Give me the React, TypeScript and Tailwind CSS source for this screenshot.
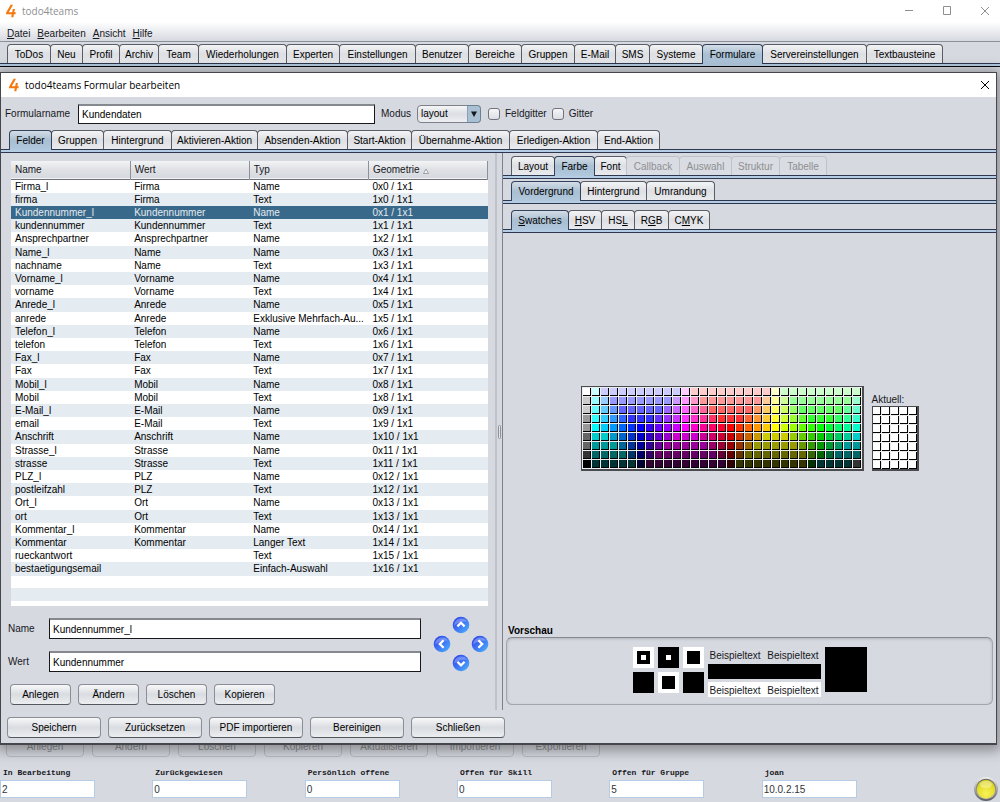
import React from "react";
import clsx from "clsx";

type TabDef = { label: React.ReactNode; width: string; selected?: boolean; disabled?: boolean };

const mainTabs: TabDef[] = [
  { label: "ToDos", width: "w-[43px]" },
  { label: "Neu", width: "w-[32px]" },
  { label: "Profil", width: "w-[37px]" },
  { label: "Archiv", width: "w-[39px]" },
  { label: "Team", width: "w-[40px]" },
  { label: "Wiederholungen", width: "w-[88px]" },
  { label: "Experten", width: "w-[53px]" },
  { label: "Einstellungen", width: "w-[76px]" },
  { label: "Benutzer", width: "w-[53px]" },
  { label: "Bereiche", width: "w-[53px]" },
  { label: "Gruppen", width: "w-[53px]" },
  { label: "E-Mail", width: "w-[41px]" },
  { label: "SMS", width: "w-[34px]" },
  { label: "Systeme", width: "w-[53px]" },
  { label: "Formulare", width: "w-[60px]", selected: true },
  { label: "Servereinstellungen", width: "w-[104px]" },
  { label: "Textbausteine", width: "w-[76px]" },
];

const formTabs: TabDef[] = [
  { label: "Felder", width: "w-[42px]", selected: true },
  { label: "Gruppen", width: "w-[52px]" },
  { label: "Hintergrund", width: "w-[68px]" },
  { label: "Aktivieren-Aktion", width: "w-[86px]" },
  { label: "Absenden-Aktion", width: "w-[90px]" },
  { label: "Start-Aktion", width: "w-[64px]" },
  { label: "Übernahme-Aktion", width: "w-[98px]" },
  { label: "Erledigen-Aktion", width: "w-[88px]" },
  { label: "End-Aktion", width: "w-[62px]" },
];

const propertyTabs: TabDef[] = [
  { label: "Layout", width: "w-[43px]" },
  { label: "Farbe", width: "w-[40px]", selected: true },
  { label: "Font", width: "w-[32px]" },
  { label: "Callback", width: "w-[53px]", disabled: true },
  { label: "Auswahl", width: "w-[52px]", disabled: true },
  { label: "Struktur", width: "w-[48px]", disabled: true },
  { label: "Tabelle", width: "w-[47px]", disabled: true },
];

const layerTabs: TabDef[] = [
  { label: "Vordergrund", width: "w-[69px]", selected: true },
  { label: "Hintergrund", width: "w-[66px]" },
  { label: "Umrandung", width: "w-[68px]" },
];

const chooserTabs: TabDef[] = [
  { label: <><u>S</u>watches</>, width: "w-[57px]", selected: true },
  { label: <><u>H</u>SV</>, width: "w-[33px]" },
  { label: <>HS<u>L</u></>, width: "w-[33px]" },
  { label: <>R<u>G</u>B</>, width: "w-[34px]" },
  { label: <>C<u>M</u>YK</>, width: "w-[41px]" },
];

const fields: string[][] = [
  ["Firma_l", "Firma", "Name", "0x0 / 1x1"],
  ["firma", "Firma", "Text", "1x0 / 1x1"],
  ["Kundennummer_l", "Kundennummer", "Name", "0x1 / 1x1"],
  ["kundennummer", "Kundennummer", "Text", "1x1 / 1x1"],
  ["Ansprechpartner", "Ansprechpartner", "Name", "1x2 / 1x1"],
  ["Name_l", "Name", "Name", "0x3 / 1x1"],
  ["nachname", "Name", "Text", "1x3 / 1x1"],
  ["Vorname_l", "Vorname", "Name", "0x4 / 1x1"],
  ["vorname", "Vorname", "Text", "1x4 / 1x1"],
  ["Anrede_l", "Anrede", "Name", "0x5 / 1x1"],
  ["anrede", "Anrede", "Exklusive Mehrfach-Au...", "1x5 / 1x1"],
  ["Telefon_l", "Telefon", "Name", "0x6 / 1x1"],
  ["telefon", "Telefon", "Text", "1x6 / 1x1"],
  ["Fax_l", "Fax", "Name", "0x7 / 1x1"],
  ["Fax", "Fax", "Text", "1x7 / 1x1"],
  ["Mobil_l", "Mobil", "Name", "0x8 / 1x1"],
  ["Mobil", "Mobil", "Text", "1x8 / 1x1"],
  ["E-Mail_l", "E-Mail", "Name", "0x9 / 1x1"],
  ["email", "E-Mail", "Text", "1x9 / 1x1"],
  ["Anschrift", "Anschrift", "Name", "1x10 / 1x1"],
  ["Strasse_l", "Strasse", "Name", "0x11 / 1x1"],
  ["strasse", "Strasse", "Text", "1x11 / 1x1"],
  ["PLZ_l", "PLZ", "Name", "0x12 / 1x1"],
  ["postleifzahl", "PLZ", "Text", "1x12 / 1x1"],
  ["Ort_l", "Ort", "Name", "0x13 / 1x1"],
  ["ort", "Ort", "Text", "1x13 / 1x1"],
  ["Kommentar_l", "Kommentar", "Name", "0x14 / 1x1"],
  ["Kommentar", "Kommentar", "Langer Text", "1x14 / 1x1"],
  ["rueckantwort", "", "Text", "1x15 / 1x1"],
  ["bestaetigungsemail", "", "Einfach-Auswahl", "1x16 / 1x1"],
];

// Palette rows; "ccf*9" repeats a colour nine times.
const palette = [
  "fff cff ccf*9 fcf fcc*9 ffc cfc*9",
  "ccc 9ff 9cf 99f*7 c9f f9f f9c f99*7 fc9 ff9 cf9 9f9*7 9fc",
  "ccc 6ff 6cf 69f 66f*5 96f c6f f6f f6c f69 f66*5 f96 fc6 ff6 cf6 9f6 6f6*5 6f9 6fc",
  "999 3ff 3cf 39f 36f 33f*3 63f 93f c3f f3f f3c f39 f36 f33*3 f63 f93 fc3 ff3 cf3 9f3 6f3 3f3*3 3f6 3f9 3fc",
  "999 0ff 0cf 09f 06f 03f 00f 30f 60f 90f c0f f0f f0c f09 f06 f03 f00 f30 f60 f90 fc0 ff0 cf0 9f0 6f0 3f0 0f0 0f3 0f6 0f9 0fc",
  "666 0cc*2 09c 06c 03c 00c 30c 60c 90c c0c*3 c09 c06 c03 c00 c30 c60 c90 cc0*3 9c0 6c0 3c0 0c0 0c3 0c6 0c9 0cc",
  "666 099*3 069 039 009 309 609 909*5 906 903 900 930 960 990*5 690 390 090 093 096 099*2",
  "333 066*4 036 006 306 606*7 603 600 630 660*7 360 060 063 066*3",
  "000 033*5 003 303*9 300 330*8 030 033*4 333",
].flatMap((row) =>
  row.split(" ").flatMap((run) => {
    const [color, count] = run.split("*");
    return Array<string>(Number(count ?? 1)).fill("#" + color);
  }),
);

function TabStrip({ tabs, label, className, bandClass }: { tabs: TabDef[]; label: string; className?: string; bandClass?: string }) {
  return (
    <div>
      <div role="tablist" aria-label={label} className={clsx("flex items-end", className)}>
        {tabs.map((tab, i) => (
          <div key={i} role="presentation" className={clsx("flex shrink-0 items-end", tab.width)}>
            <button
              role="tab"
              aria-selected={!!tab.selected}
              disabled={tab.disabled}
              className={clsx(
                "-mr-px flex-1 rounded-t-[4px] border border-b-0 text-center leading-[17px] whitespace-nowrap",
                tab.selected
                  ? "relative -mb-px h-[20px] border-[#33415a] bg-linear-to-b from-[#d3dde6] via-[#a9bfd2] to-[#b0c8dd] text-black"
                  : tab.disabled
                    ? "h-[19px] border-[#bfc2c9] bg-[#d9dce2] text-[#8e8f91]"
                    : "h-[19px] border-[#5a5d66] bg-linear-to-b from-[#f3f4f5] via-[#dddfe3] to-[#e8eaec] text-black",
              )}
            >
              {tab.label}
            </button>
          </div>
        ))}
      </div>
      <div className={clsx("h-[4px] border-y border-[#2d3850] bg-[#b4cde4]", bandClass)} />
    </div>
  );
}

function Logo() {
  return (
    <svg viewBox="0 0 12 14" className="h-[14px] w-[12px]" aria-hidden="true">
      <path d="M5.6 0.8H8L3.800 8.300H7.200L7.800 5H9.900L9.300 8.300H10.800L10.500 10.300H8.900L8.400 13.200H6.200L6.800 10.300H0.900L1.200 8.500z" fill="#f5780c" />
    </svg>
  );
}

function CloseIcon() {
  return (
    <svg viewBox="0 0 10 10" className="size-[10px]" aria-hidden="true">
      <path d="M1 1 9 9M9 1 1 9" fill="none" stroke="currentColor" strokeWidth="1" />
    </svg>
  );
}

function PushButton({ children, className }: { children: React.ReactNode; className?: string }) {
  return (
    <button
      className={clsx(
        "h-[21px] shrink-0 rounded-[4px] border border-[#8b8e95] border-b-[#55575d] bg-linear-to-b from-[#f8f8f9] via-[#d9dce1] to-[#eceef0] text-center leading-[18px] text-black",
        className,
      )}
    >
      {children}
    </button>
  );
}

const arrowPaths = {
  up: "M5.4 10.4 9 6.8l3.6 3.6",
  left: "M10.6 5.2 6.8 9l3.8 3.8",
  right: "M7.4 5.2 11.2 9l-3.8 3.8",
  down: "M5.4 7.8 9 11.4l3.6-3.6",
};

function ArrowButton({ dir, label, className }: { dir: keyof typeof arrowPaths; label: string; className?: string }) {
  return (
    <button aria-label={label} className={clsx("size-[18px]", className)}>
      <svg viewBox="0 0 18 18" className="size-[18px]">
        <defs>
          <linearGradient id={"orb-" + dir} x1="0" y1="0" x2="1" y2="1">
            <stop offset="0.1" stopColor="#2f45e6" />
            <stop offset="0.5" stopColor="#3f74f4" />
            <stop offset="1" stopColor="#4bb8fb" />
          </linearGradient>
        </defs>
        <circle cx="9" cy="9" r="8.3" fill={"url(#orb-" + dir + ")"} />
        <path d="M2.2 9.5A7 7 0 0 1 15 5.6C11 5 6 6 2.2 9.5z" fill="#fff" opacity="0.28" />
        <path d={arrowPaths[dir]} fill="none" stroke="#fff" strokeWidth="2.3" />
      </svg>
    </button>
  );
}

function CheckBox({ label }: { label: string }) {
  return (
    <label className="flex items-center gap-[5px]">
      <input
        type="checkbox"
        className="size-[12px] appearance-none rounded-[3px] border border-[#70737b] bg-linear-to-b from-[#f6f6f7] to-[#dcdee3]"
      />
      {label}
    </label>
  );
}

const inputClass =
  "min-w-0 border border-t-2 border-[#16181c] border-t-[#85888f] bg-white pl-[3px] text-black outline-none";

function Swatches({ colors, className, label }: { colors: string[]; className: string; label: string }) {
  return (
    <div aria-label={label} className={clsx("grid gap-px border border-r-2 border-b-2 border-[#4a4b4f] bg-[#ecedef]", className)}>
      {colors.map((color, i) => (
        <div key={i} className="size-[8px] border-r border-b border-black" style={{ backgroundColor: color }} />
      ))}
    </div>
  );
}

function FieldTable() {
  const head = "border-r border-[#8d9097] pl-[4px] text-left font-normal";
  return (
    <div className="h-[445px] overflow-hidden bg-white">
      <table className="w-full table-fixed border-collapse">
        <thead>
          <tr className="h-[18px] border-b border-[#6e7078] bg-linear-to-b from-[#f3f4f5] via-[#dfe1e5] to-[#d6d9df]">
            <th className={head}>Name</th>
            <th className={head}>Wert</th>
            <th className={head}>Typ</th>
            <th className={head}>
              Geometrie
              <svg viewBox="0 0 6 6" className="ml-[3px] inline size-[6px]" aria-hidden="true">
                <path d="M3 1 5.5 5.5H.5z" fill="#f4f4f5" stroke="#8d9097" strokeWidth="0.8" />
              </svg>
            </th>
          </tr>
        </thead>
        <tbody>
          {fields.map((row, i) => (
            <tr
              key={i}
              className={clsx(
                "h-[13px] leading-[13px] [&:nth-child(5n)]:h-[14px]",
                i === 2 ? "bg-[#39698a] text-[#e3eaf0]" : i % 2 ? "bg-[#e4ebf1] text-black" : "bg-white text-black",
              )}
            >
              {row.map((cell, j) => (
                <td key={j} className="overflow-hidden py-0 pl-[4px] whitespace-nowrap">
                  {cell}
                </td>
              ))}
            </tr>
          ))}
        </tbody>
      </table>
      <div className="mt-[12px] h-[13px] bg-[#e4ebf1]" />
    </div>
  );
}

function FieldsPane() {
  return (
    <div className="w-[494px] shrink-0 pt-[8px]">
      <div className="pr-[7px] pl-[10px]">
        <FieldTable />
      </div>
      <div className="flex pt-[10px] pr-[6px] pl-[7px]">
        <div className="flex flex-1 flex-col gap-[12px] pt-[2px]">
          <label className="flex items-center">
            <span className="w-[41px]">Name</span>
            <input className={clsx(inputClass, "h-[21px] flex-1")} defaultValue="Kundennummer_l" />
          </label>
          <label className="flex items-center">
            <span className="w-[41px]">Wert</span>
            <input className={clsx(inputClass, "h-[21px] flex-1")} defaultValue="Kundennummer" />
          </label>
        </div>
        <div className="ml-[12px] grid grid-cols-[19px_19px_18px] grid-rows-[19px_19px_18px]">
          <ArrowButton dir="up" label="Nach oben" className="col-start-2 row-start-1" />
          <ArrowButton dir="left" label="Nach links" className="col-start-1 row-start-2" />
          <ArrowButton dir="right" label="Nach rechts" className="col-start-3 row-start-2" />
          <ArrowButton dir="down" label="Nach unten" className="col-start-2 row-start-3" />
        </div>
      </div>
      <div className="flex gap-[7px] pt-[12px] pl-[9px]">
        {["Anlegen", "Ändern", "Löschen", "Kopieren"].map((t) => (
          <PushButton key={t} className="w-[61px]">
            {t}
          </PushButton>
        ))}
      </div>
    </div>
  );
}

function Preview() {
  return (
    <div className="flex items-start justify-center gap-[4px] pt-[9px]">
      <div className="grid grid-cols-3 gap-[4px]">
        <div className="grid size-[21px] place-items-center bg-white">
          <div className="grid size-[13px] place-items-center bg-black">
            <div className="size-[5px] bg-white" />
          </div>
        </div>
        <div className="grid size-[21px] place-items-center bg-black">
          <div className="size-[5px] bg-white" />
        </div>
        <div className="grid size-[21px] place-items-center bg-white">
          <div className="size-[13px] bg-black" />
        </div>
        <div className="size-[21px] bg-black" />
        <div className="grid size-[21px] place-items-center bg-white">
          <div className="size-[13px] bg-black" />
        </div>
        <div className="size-[21px] bg-black" />
      </div>
      <div className="flex w-[113px] flex-col gap-[2px]">
        <div className="flex h-[15px] items-end justify-between px-[2px] leading-[13px]">
          <span>Beispieltext</span>
          <span>Beispieltext</span>
        </div>
        <div className="h-[15px] bg-black" />
        <div className="mt-px flex h-[15px] items-end justify-between bg-white px-[2px] leading-[13px]">
          <span>Beispieltext</span>
          <span>Beispieltext</span>
        </div>
      </div>
      <div className="h-[45px] w-[42px] bg-black" />
    </div>
  );
}

function PropertiesPane() {
  return (
    <div className="flex min-w-0 flex-1 flex-col border-l border-[#7d8088]">
      <TabStrip tabs={propertyTabs} label="Eigenschaften" className="pt-[3px] pl-[8px]" />
      <TabStrip tabs={layerTabs} label="Ebene" className="pt-[2px] pl-[8px]" />
      <TabStrip tabs={chooserTabs} label="Farbauswahl" className="pt-[6px] pl-[8px]" />
      <div className="flex flex-1 items-center justify-center">
        <div className="flex items-end gap-[8px]">
          <Swatches colors={palette} className="grid-cols-[repeat(31,8px)] p-px" label="Farbfelder" />
          <div>
            <div className="leading-[13px]">Aktuell:</div>
            <Swatches colors={Array<string>(35).fill("#fff")} className="grid-cols-[repeat(5,8px)]" label="Zuletzt verwendet" />
          </div>
        </div>
      </div>
      <div className="mr-[3px] mb-[5px] ml-[3px]">
        <div className="pl-[2px] leading-[13px] font-bold text-black">Vorschau</div>
        <div className="h-[68px] rounded-[6px] border border-[#a3a6ad] border-t-[#85888f] shadow-[inset_0_1px_3px_#b0b3ba]">
          <Preview />
        </div>
      </div>
    </div>
  );
}

function FormDialog() {
  return (
    <section
      role="dialog"
      aria-label="todo4teams Formular bearbeiten"
      className="absolute top-[72px] right-[3px] left-0 border border-b-2 border-[#45474c] bg-[#d6d9e0] shadow-[0_2px_12px_4px_rgba(0,0,0,0.35)]"
    >
      <header className="flex h-[24px] items-center bg-white pr-[6px] pl-[7px]">
        <Logo />
        <h1 className="ml-[5px] flex-1 font-['Open_Sans','Noto_Sans',sans-serif] text-black">todo4teams Formular bearbeiten</h1>
        <button aria-label="Schließen" className="text-black">
          <CloseIcon />
        </button>
      </header>
      <div className="flex h-[33px] items-center pl-[4px]">
        <label htmlFor="formname" className="w-[73px]">
          Formularname
        </label>
        <input id="formname" className={clsx(inputClass, "h-[20px] w-[297px]")} defaultValue="Kundendaten" />
        <label htmlFor="modus" className="ml-[6px] w-[36px]">
          Modus
        </label>
        <div className="relative">
          <select
            id="modus"
            className="h-[18px] w-[64px] appearance-none rounded-[4px] border border-[#7d8088] bg-linear-to-b from-[#f6f6f7] via-[#dcdee3] to-[#eceef0] pl-[3px] text-black"
          >
            <option>layout</option>
          </select>
          <svg viewBox="0 0 14 18" className="pointer-events-none absolute top-0 right-0 h-[18px] w-[14px]" aria-hidden="true">
            <path d="M0 .5H10.500A3 3 0 0 1 13.500 3.500V14.500A3 3 0 0 1 10.500 17.500H0z" fill="#a9bfd2" stroke="#6c8093" />
            <path d="M4 6.500H10L7 12z" fill="#14181e" />
          </svg>
        </div>
        <div className="ml-[7px] flex gap-[5px]">
          <CheckBox label="Feldgitter" />
          <CheckBox label="Gitter" />
        </div>
      </div>
      <TabStrip tabs={formTabs} label="Formular" className="pl-[8px]" />
      <div className="flex h-[557px]">
        <FieldsPane />
        <div className="flex w-[7px] shrink-0 flex-col justify-center border-l-2 border-[#bfc2c9] pl-[1px]">
          <div className="h-[14px] w-[3px] rounded-[2px] border border-[#8d9097] bg-[#e4e6ea]" />
        </div>
        <PropertiesPane />
      </div>
      <footer className="flex gap-[7px] pt-[7px] pb-[5px] pl-[6px]">
        {["Speichern", "Zurücksetzen", "PDF importieren", "Bereinigen", "Schließen"].map((t) => (
          <PushButton key={t} className="w-[94px]">
            {t}
          </PushButton>
        ))}
      </footer>
    </section>
  );
}

const counters = [
  ["In Bearbeitung", "2"],
  ["Zurückgewiesen", "0"],
  ["Persönlich offene", "0"],
  ["Offen für Skill", "0"],
  ["Offen für Gruppe", "5"],
  ["joan", "10.0.2.15"],
];

export default function App() {
  return (
    <div className="relative flex min-h-screen flex-col overflow-hidden bg-[#d6d9e0] font-['Liberation_Sans',Arial,sans-serif] text-[10px] text-[#16181c]">
      <header className="flex h-[22px] items-center bg-white pr-[10px] pl-[5px] text-[#8e8f91]">
        <Logo />
        <span className="ml-[5px] flex-1 font-['Open_Sans','Noto_Sans',sans-serif]">todo4teams</span>
        <div className="flex items-center gap-[28px]">
          <button aria-label="Minimieren">
            <svg viewBox="0 0 10 10" className="size-[10px]">
              <path d="M1 4.500H9" stroke="currentColor" />
            </svg>
          </button>
          <button aria-label="Maximieren">
            <svg viewBox="0 0 10 10" className="size-[10px]">
              <path d="M1.500 .5H8.500V8.500H1.500z" fill="none" stroke="currentColor" />
            </svg>
          </button>
          <button aria-label="Schließen">
            <CloseIcon />
          </button>
        </div>
      </header>
      <nav className="flex h-[20px] items-center gap-[7px] border-b border-[#8d9097] bg-linear-to-b from-white to-[#d6d9e0] pt-[3px] pl-[7px] text-[#16181c]">
        <button><u>D</u>atei</button>
        <button><u>B</u>earbeiten</button>
        <button><u>A</u>nsicht</button>
        <button><u>H</u>ilfe</button>
      </nav>
      <TabStrip tabs={mainTabs} label="Bereiche" className="pt-[2px] pl-[7px]" bandClass="border-b-[#05070b]" />
      <div className="flex-1" />
      <div className="flex gap-[8px] pb-[10px] pl-[6px]">
        {["Anlegen", "Ändern", "Löschen", "Kopieren", "Aktualisieren", "Importieren", "Exportieren"].map((t) => (
          <button
            key={t}
            disabled
            className="h-[20px] w-[78px] rounded-[4px] border border-[#b9bcc3] text-center leading-[18px] text-[#8e8f91]"
          >
            {t}
          </button>
        ))}
      </div>
      <footer className="flex items-end pb-[4px]">
        <div className="grid flex-1 grid-cols-6">
          {counters.map(([label, value]) => (
            <label key={label} className="flex flex-col">
              <span className="pb-px pl-[3px] font-['Liberation_Mono','Courier_New',monospace] text-[8px] leading-[12px] font-bold">{label}</span>
              <input
                readOnly
                value={value}
                className="h-[18px] w-[95px] border border-[#b4cde4] bg-white pl-[1px] text-[#333539] outline-none"
              />
            </label>
          ))}
        </div>
        <svg viewBox="0 0 26 26" className="mr-px -mb-[4px] ml-[59px] size-[26px]" role="img" aria-label="Status">
          <defs>
            <linearGradient id="ring" x1="0" y1="0" x2="0" y2="1">
              <stop offset="0" stopColor="#f0f0f0" />
              <stop offset="0.5" stopColor="#a8a8a8" />
              <stop offset="1" stopColor="#5c5c5c" />
            </linearGradient>
            <linearGradient id="bezel" x1="0" y1="0" x2="0" y2="1">
              <stop offset="0" stopColor="#5e5e58" />
              <stop offset="1" stopColor="#c4c4b0" />
            </linearGradient>
            <radialGradient id="lamp" cx="0.5" cy="0.75" r="0.75">
              <stop offset="0" stopColor="#f7f25a" />
              <stop offset="0.6" stopColor="#e6e02c" />
              <stop offset="1" stopColor="#cfc81c" />
            </radialGradient>
          </defs>
          <circle cx="13" cy="13" r="12" fill="url(#ring)" />
          <circle cx="13" cy="13" r="10.200" fill="url(#bezel)" />
          <circle cx="13" cy="13" r="9.200" fill="url(#lamp)" />
          <ellipse cx="13" cy="8.500" rx="6" ry="3.800" fill="#fff" opacity="0.35" />
        </svg>
      </footer>
      <FormDialog />
    </div>
  );
}
